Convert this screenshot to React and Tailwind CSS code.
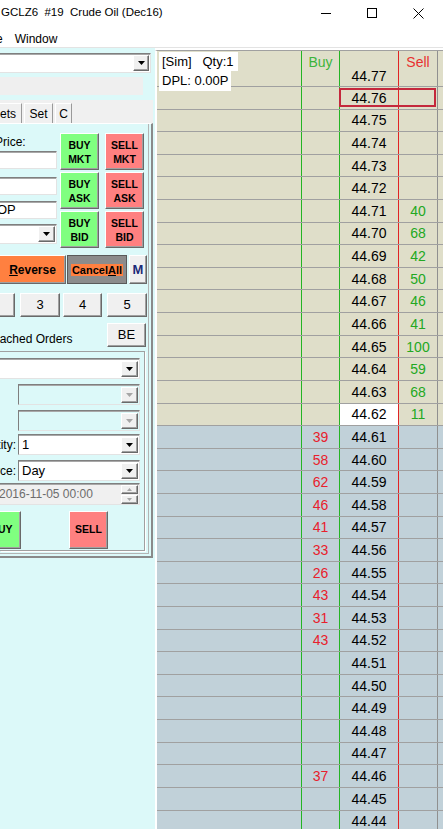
import React from 'react';

const SELLS = { '44.71': 40, '44.70': 68, '44.69': 42, '44.68': 50, '44.67': 46, '44.66': 41, '44.65': 100, '44.64': 59, '44.63': 68, '44.62': 11 };
const BUYS = { '44.61': 39, '44.60': 58, '44.59': 62, '44.58': 46, '44.57': 41, '44.56': 33, '44.55': 26, '44.54': 43, '44.53': 31, '44.52': 43, '44.46': 37 };

const prices = [];
for (let p = 4476; p >= 4444; p--) prices.push((p / 100).toFixed(2));

function Raised({ className = '', children }) {
    return (
        <div className={`flex shrink-0 items-center justify-center border border-t-white border-l-white border-r-[#696969] border-b-[#696969] shadow-[inset_-1px_-1px_0_#a0a0a0] ${className}`}>
            {children}
        </div>
    );
}

function Sunken({ className = '', children }) {
    return (
        <div className={`flex shrink-0 items-center border border-t-[#7f7f7f] border-l-[#7f7f7f] border-r-[#e3e3e3] border-b-[#e3e3e3] shadow-[inset_0_1px_0_#a8a8a8] ${className}`}>
            {children}
        </div>
    );
}

function DropBtn({ disabled, className = 'w-[17px] h-[16px]' }) {
    return (
        <Raised className={`bg-[#f0f0f0] ${className}`}>
            <svg width="7" height="4" viewBox="0 0 7 4">
                <path d="M0 0h7L3.5 4z" fill={disabled ? '#a6a6a6' : '#000'} />
            </svg>
        </Raised>
    );
}

function Combo({ className = '', text, disabled }) {
    return (
        <Sunken className={`pr-[1px] ${disabled ? '' : 'bg-white'} ${className}`}>
            <span className="flex-1 pl-[3px] whitespace-nowrap">{text}</span>
            <DropBtn disabled={disabled} />
        </Sunken>
    );
}

function Tab({ className = '', children }) {
    return (
        <div className={`h-[20px] flex items-center border-t border-l border-r border-t-white border-l-white border-r-[#9a9a9a] ${className}`}>
            {children}
        </div>
    );
}

function LadderRow({ price }) {
    const ask = parseFloat(price) >= 44.62;
    const sell = SELLS[price];
    const buy = BUYS[price];
    return (
        <div className={`relative flex h-[22.62px] shrink-0 border-b border-[#a0a0a0] ${ask ? 'bg-[#dfdec9]' : 'bg-[#c1d1d9]'}`}>
            <div className="w-[144px] shrink-0" />
            <div className="w-[38px] shrink-0 border-l border-[#24b424] flex items-center justify-center text-[#e8202c]">{buy}</div>
            <div className={`w-[59px] shrink-0 border-l border-[#24b424] flex items-center justify-center ${price === '44.62' ? 'bg-white' : ''}`}>{price}</div>
            <div className="w-[39px] shrink-0 border-l border-[#e02424] flex items-center justify-center text-[#22a822]">{sell}</div>
            <div className="flex-1 border-l border-[#909090]" />
            {/* selected price cursor */}
            {price === '44.76' && (
                <div className="absolute left-[182px] top-[1px] w-[97px] h-[19px] border-2 border-[#c4283c]" />
            )}
        </div>
    );
}

export default function App() {
    return (
        <div className="w-[443px] h-[829px] overflow-hidden flex flex-col bg-white text-black font-['Liberation_Sans',Arial,sans-serif]">
            {/* Title bar */}
            <div className="h-[30px] shrink-0 flex items-center">
                <span className="whitespace-pre text-[11.5px] pl-[1px] pb-[4px]">GCLZ6  #19  Crude Oil (Dec16)</span>
                <div className="ml-auto flex h-full pr-[2px] pb-[4px]">
                    <div className="w-[46px] flex items-center justify-center">
                        <svg width="10" height="10" viewBox="0 0 10 10"><path d="M0 5.5h10" stroke="#000" /></svg>
                    </div>
                    <div className="w-[46px] flex items-center justify-center">
                        <svg width="10" height="10" viewBox="0 0 10 10"><rect x="0.5" y="0.5" width="9" height="9" fill="none" stroke="#000" /></svg>
                    </div>
                    <div className="w-[46px] flex items-center justify-center">
                        <svg width="11" height="11" viewBox="0 0 11 11"><path d="M0.5 0.5l10 10M10.5 0.5l-10 10" stroke="#000" /></svg>
                    </div>
                </div>
            </div>

            {/* Menu bar */}
            <div className="h-[18px] shrink-0 flex items-center border-b border-[#e3e3e3] text-[12px]">
                <span className="-ml-[4px]">e</span>
                <span className="ml-[12px]">Window</span>
            </div>

            <div className="flex flex-1 min-h-0">
                {/* Order entry panel */}
                <div className="w-[155px] shrink-0 bg-[#dcf9f9] overflow-hidden flex flex-col text-[12px]">
                    <Sunken className="mt-[5px] h-[20px] w-[151px] border-l-0 bg-white justify-end pr-[1px]">
                        <DropBtn className="w-[16px] h-[16px]" />
                    </Sunken>
                    <div className="mt-[4px] h-[18px] w-[143px] shrink-0 bg-[#efefef]" />

                    {/* Tabs */}
                    <div className="mt-[5px] h-[23px] w-[153px] shrink-0 bg-[#f0f0f0] flex items-end gap-[2px]">
                        <Tab className="w-[22px] border-l-0 justify-end pr-[5px]">ets</Tab>
                        <Tab className="w-[29px] justify-center">Set</Tab>
                        <Tab className="w-[17px] justify-center">C</Tab>
                    </div>

                    {/* Tab page */}
                    <div className="w-[153px] h-[435px] shrink-0 flex flex-col pt-[9px] border-t border-t-white border-r-2 border-b-2 border-r-[#8a8a8a] border-b-[#8a8a8a] shadow-[inset_-2px_-2px_0_#dcf9f9,inset_-3px_-3px_0_#b4b4b4]">
                        <div className="flex">
                            <div className="w-[57px] flex flex-col">
                                <div className="h-[18px] flex items-center"><span className="-ml-[5px]">Price:</span></div>
                                <Sunken className="h-[18px] border-l-0 bg-white" />
                                <Sunken className="mt-[8px] h-[18px] border-l-0 bg-white" />
                                <Sunken className="mt-[6px] h-[18px] border-l-0 bg-white"><span className="-ml-[3px] text-[13px]">OP</span></Sunken>
                                <Combo className="mt-[5px] h-[20px] border-l-0" />
                            </div>
                            <div className="ml-[3px] grid grid-cols-[39px_39px] gap-x-[6px] gap-y-[2px] font-bold text-[10.5px] leading-[14px] text-center">
                                <Raised className="h-[37px] bg-[#80ff80]">BUY<br />MKT</Raised>
                                <Raised className="h-[37px] bg-[#ff8080]">SELL<br />MKT</Raised>
                                <Raised className="h-[37px] bg-[#80ff80]">BUY<br />ASK</Raised>
                                <Raised className="h-[37px] bg-[#ff8080]">SELL<br />ASK</Raised>
                                <Raised className="h-[37px] bg-[#80ff80]">BUY<br />BID</Raised>
                                <Raised className="h-[37px] bg-[#ff8080]">SELL<br />BID</Raised>
                            </div>
                        </div>

                        <div className="mt-[7px] flex h-[29px]">
                            <Raised className="w-[66px] h-full bg-[#ff8040] border-l-0 font-bold text-[12px]">
                                <span><span className="underline">R</span>everse</span>
                            </Raised>
                            <div className="ml-[1px] w-[60px] h-full bg-[#8c8c8c] border border-[#5a5a5a] flex items-center justify-center">
                                <span className="bg-[#ff8040] px-[1px] font-bold text-[11px] leading-[12px]">Cancel<span className="underline">A</span>ll</span>
                            </div>
                            <Raised className="ml-[2px] w-[18px] h-full bg-[#f0f0f0] font-bold text-[13px] text-[#1b2a78]">M</Raised>
                        </div>

                        <div className="mt-[9px] flex h-[24px] text-[13px]">
                            <Raised className="w-[15px] h-full bg-[#f0f0f0] border-l-0" />
                            <Raised className="ml-[5px] w-[40px] h-full bg-[#f0f0f0]">3</Raised>
                            <Raised className="ml-[3px] w-[39px] h-full bg-[#f0f0f0]">4</Raised>
                            <Raised className="ml-[5px] w-[40px] h-full bg-[#f0f0f0]">5</Raised>
                        </div>

                        <div className="mt-[6px] flex h-[24px] items-center">
                            <div className="w-[107px] flex">
                                <span className="-ml-[15px] mt-[8px] whitespace-nowrap">Attached Orders</span>
                            </div>
                            <Raised className="w-[39px] h-full bg-[#f0f0f0] text-[13px]">BE</Raised>
                        </div>

                        {/* Attached orders group */}
                        <div className="mt-[4px] w-[145px] h-[200px] shrink-0 flex flex-col pt-[6px] border border-l-0 border-[#a0a0a0] shadow-[1px_1px_0_#fff]">
                            <Combo className="w-[140px] h-[21px] border-l-0" />
                            <Combo className="mt-[5px] ml-[18px] w-[122px] h-[21px]" disabled />
                            <Combo className="mt-[5px] ml-[18px] w-[122px] h-[21px]" disabled />
                            <div className="mt-[3px] flex items-center">
                                <div className="w-[18px] flex justify-end pr-[2px]"><span className="whitespace-nowrap">Quantity:</span></div>
                                <Combo className="w-[122px] h-[21px] text-[13px]" text="1" />
                            </div>
                            <div className="mt-[5px] flex items-center">
                                <div className="w-[18px] flex justify-end pr-[2px]"><span className="whitespace-nowrap">Time In Force:</span></div>
                                <Combo className="w-[122px] h-[21px] text-[13px]" text="Day" />
                            </div>
                            <Sunken className="mt-[2px] w-[140px] h-[22px] border-l-0 bg-[#f0f0f0] pr-[1px]">
                                <span className="flex-1 -ml-[1px] whitespace-nowrap text-[#6d6d6d]">2016-11-05 00:00</span>
                                <div className="flex flex-col gap-[1px]">
                                    <Raised className="w-[17px] h-[9px] bg-[#f0f0f0]">
                                        <svg width="5" height="3" viewBox="0 0 5 3"><path d="M0 3h5L2.5 0z" fill="#a6a6a6" /></svg>
                                    </Raised>
                                    <Raised className="w-[17px] h-[9px] bg-[#f0f0f0]">
                                        <svg width="5" height="3" viewBox="0 0 5 3"><path d="M0 0h5L2.5 3z" fill="#a6a6a6" /></svg>
                                    </Raised>
                                </div>
                            </Sunken>
                            <div className="mt-[6px] flex h-[38px] font-bold text-[10.5px]">
                                <Raised className="-ml-[18px] w-[39px] h-full bg-[#80ff80]">BUY</Raised>
                                <Raised className="ml-[48px] w-[39px] h-full bg-[#ff8080]">SELL</Raised>
                            </div>
                        </div>
                    </div>
                </div>

                {/* Price ladder */}
                <div className="relative flex-1 min-w-0 mt-[2px] flex flex-col overflow-hidden border-l-2 border-l-white border-t border-t-[#a0a0a0] text-[14px] leading-[16px]">
                    <div className="flex h-[36px] shrink-0 border-b border-[#a0a0a0] bg-[#dfdec9]">
                        <div className="w-[144px] shrink-0" />
                        <div className="w-[38px] shrink-0 border-l border-[#24b424] flex justify-center pt-[3px] text-[#3cb43c]">Buy</div>
                        <div className="w-[59px] shrink-0 border-l border-[#24b424] flex items-end justify-center pb-[2px]">44.77</div>
                        <div className="w-[39px] shrink-0 border-l border-[#e02424] flex justify-center pt-[3px] text-[#e83030]">Sell</div>
                        <div className="flex-1 border-l border-[#909090]" />
                    </div>
                    {prices.map((p) => (
                        <LadderRow key={p} price={p} />
                    ))}

                    {/* Account overlay */}
                    <div className="absolute left-[2px] top-[1px] flex flex-col items-start text-[13px] leading-[19px]">
                        <span className="bg-white whitespace-pre pl-[3px] pr-[4px]">[Sim]   Qty:1</span>
                        <span className="bg-white whitespace-pre pl-[3px] pr-[2px] leading-[20px]">DPL: 0.00P</span>
                    </div>
                </div>
            </div>
        </div>
    );
}
